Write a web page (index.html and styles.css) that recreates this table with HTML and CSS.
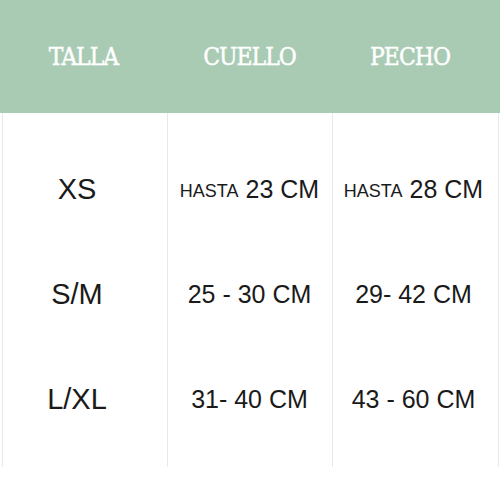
FILE: index.html
```html
<!DOCTYPE html>
<html lang="es">
<head>
<meta charset="utf-8">
<title>Tabla de tallas</title>
<link rel="stylesheet" href="styles.css">
</head>
<body>
<div class="chart">
  <div class="head">
    <div class="th"><span class="th-text">TALLA</span></div>
    <div class="th"><span class="th-text">CUELLO</span></div>
    <div class="th th-last"><span class="th-text">PECHO</span></div>
  </div>
  <div class="grid">
    <div class="cell c1 size">XS</div>
    <div class="cell c2"><span class="small">HASTA</span>&nbsp;23 CM</div>
    <div class="cell c3"><span class="small">HASTA</span>&nbsp;28 CM</div>
    <div class="cell c1 size">S/M</div>
    <div class="cell c2">25 - 30 CM</div>
    <div class="cell c3">29- 42 CM</div>
    <div class="cell c1 size">L/XL</div>
    <div class="cell c2">31- 40 CM</div>
    <div class="cell c3">43 - 60 CM</div>
  </div>
</div>
</body>
</html>
```
FILE: styles.css
```css
html, body {
  margin: 0;
  padding: 0;
  background: #ffffff;
}
.chart {
  width: 500px;
  height: 500px;
}
.head {
  height: 113px;
  background: #a9cbb4;
  display: grid;
  grid-template-columns: 167px 165px 168px;
}
.th {
  display: flex;
  align-items: center;
  justify-content: center;
  color: #ffffff;
  font-family: "DejaVu Serif", serif;
  font-size: 22px;
  letter-spacing: -1px;
}
.th-text {
  display: inline-block;
  transform: scaleY(1.14);
  -webkit-text-stroke: 0.4px #ffffff;
}
.th-last {
  padding-right: 12px;
}
.grid {
  margin-left: 2px;
  width: 497px;
  height: 354px;
  box-sizing: border-box;
  padding: 24px 0 15px;
  display: grid;
  grid-template-columns: 165px 165px 167px;
  grid-template-rows: 105px 105px 105px;
  background-image:
    linear-gradient(#e4ebdf, #e4ebdf),
    linear-gradient(#e4ebdf, #e4ebdf),
    linear-gradient(#e4ebdf, #e4ebdf),
    linear-gradient(#e4ebdf, #e4ebdf);
  background-size: 1px 100%;
  background-position: 0 0, 165px 0, 330px 0, 496px 0;
  background-repeat: no-repeat;
}
.cell {
  display: flex;
  align-items: center;
  justify-content: center;
  font-family: "Liberation Sans", Arial, sans-serif;
  font-size: 25px;
  color: #1a1a1a;
  white-space: nowrap;
}
.c1 {
  padding-right: 15px;
}
.c3 {
  padding-right: 4px;
}
.size {
  font-size: 29px;
}
.small {
  font-size: 18px;
  position: relative;
  top: 2px;
}
```
